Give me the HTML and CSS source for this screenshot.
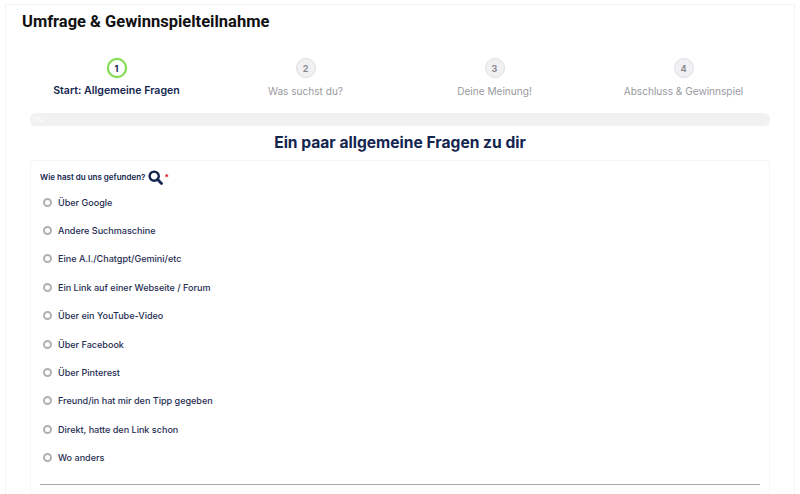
FILE: index.html
```html
<!DOCTYPE html>
<html lang="de">
<head>
<meta charset="utf-8">
<title>Umfrage &amp; Gewinnspielteilnahme</title>
<link rel="stylesheet" href="styles.css">
</head>
<body>
<main class="card">
  <h1 class="title">Umfrage &amp; Gewinnspielteilnahme</h1>
  <ol class="steps">
    <li class="step step-active"><span class="bubble">1</span><span class="step-label">Start: Allgemeine Fragen</span></li>
    <li class="step"><span class="bubble">2</span><span class="step-label">Was suchst du?</span></li>
    <li class="step"><span class="bubble">3</span><span class="step-label">Deine Meinung!</span></li>
    <li class="step"><span class="bubble">4</span><span class="step-label">Abschluss &amp; Gewinnspiel</span></li>
  </ol>
  <div class="progress"><span class="progress-text">0%</span></div>
  <h2 class="heading">Ein paar allgemeine Fragen zu dir</h2>
  <section class="panel">
    <div class="question">Wie hast du uns gefunden?
      <svg class="search" viewBox="0 0 16 16" width="15" height="15" aria-hidden="true"><circle cx="6.6" cy="6.6" r="4.9" fill="none" stroke="#14264f" stroke-width="2.6"/><path d="M10.2 10.2 14.4 14.4" stroke="#14264f" stroke-width="3" stroke-linecap="round"/></svg>
      <span class="req">*</span>
    </div>
    <ul class="options">
      <li class="option"><span class="radio"></span>Über Google</li>
      <li class="option"><span class="radio"></span>Andere Suchmaschine</li>
      <li class="option"><span class="radio"></span>Eine A.I./Chatgpt/Gemini/etc</li>
      <li class="option"><span class="radio"></span>Ein Link auf einer Webseite / Forum</li>
      <li class="option"><span class="radio"></span>Über ein YouTube-Video</li>
      <li class="option"><span class="radio"></span>Über Facebook</li>
      <li class="option"><span class="radio"></span>Über Pinterest</li>
      <li class="option"><span class="radio"></span>Freund/in hat mir den Tipp gegeben</li>
      <li class="option"><span class="radio"></span>Direkt, hatte den Link schon</li>
      <li class="option"><span class="radio"></span>Wo anders</li>
    </ul>
    <hr class="rule">
  </section>
</main>
</body>
</html>
```
FILE: styles.css
```css
* { box-sizing: border-box; }
html, body { height: 100%; }
body {
  margin: 0;
  padding: 4px 5px 0;
  background: #fff;
  font-family: Inter, "Liberation Sans", sans-serif;
  color: #14264f;
  overflow: hidden;
}
.card {
  display: flex;
  flex-direction: column;
  height: 100%;
  border: 1px solid #f3f3f4;
  border-bottom: 0;
  padding: 0 24px;
}
.title {
  margin: 7px 0 0 -8px;
  font: 700 16.5px/20px Roboto, Inter, sans-serif;
  color: #111;
  white-space: nowrap;
}
.steps {
  list-style: none;
  display: grid;
  grid-template-columns: repeat(4, 189px);
  margin: 26px 0 0 -8px;
  padding: 0;
  width: 756px;
}
.step {
  display: flex;
  flex-direction: column;
  align-items: center;
  gap: 6px;
}
.bubble {
  width: 20px;
  height: 20px;
  border-radius: 50%;
  border: 1px solid #dedfe2;
  background: #f1f1f3;
  color: #8a8a8f;
  font-size: 9px;
  font-weight: 700;
  display: flex;
  align-items: center;
  justify-content: center;
}
.step-label {
  font-size: 10.1px;
  line-height: 14px;
  color: #9a9a9f;
  white-space: nowrap;
}
.step-active .bubble {
  border: 2px solid #7fdc4f;
  background: #fff;
  color: #14264f;
  box-shadow: 0 0 2px #b7ec9b;
}
.step-active .step-label {
  font-size: 10.6px;
  font-weight: 600;
  color: #14264f;
}
.progress {
  margin: 15px 0 0;
  height: 13px;
  width: 740px;
  flex: none;
  border-radius: 6px;
  background: #f1f1f2;
  padding-left: 3px;
  font-size: 6px;
  line-height: 13px;
}
.progress-text { color: #fff; }
.heading {
  margin: 5px 0 0;
  width: 740px;
  text-align: center;
  font-size: 15.6px;
  line-height: 24px;
  font-weight: 700;
  color: #14264f;
}
.panel {
  flex: 1;
  margin-top: 5px;
  width: 740px;
  border: 1px solid #f5f5f6;
  border-bottom: 0;
  border-radius: 3px 3px 0 0;
  padding: 9px 9px 0;
}
.question {
  display: flex;
  align-items: center;
  gap: 3px;
  font-size: 8px;
  font-weight: 600;
  line-height: 15px;
  color: #14264f;
}
.search { margin-left: 0; }
.req { margin-left: -2px; color: #e0102a; font-size: 8px; font-weight: 700; }
.options {
  list-style: none;
  margin: 3px 0 0;
  padding: 0;
}
.option {
  height: 28.4px;
  display: flex;
  align-items: center;
  gap: 6px;
  padding-left: 3px;
  font-size: 9.05px;
  font-weight: 500;
  color: #1f2d52;
}
.radio {
  width: 9px;
  height: 9px;
  border-radius: 50%;
  border: 2px solid #b0b0b5;
  background: #fff;
}
.rule {
  margin: 12px 0 0;
  border: 0;
  height: 1px;
  background: #a9a9a9;
}
```
